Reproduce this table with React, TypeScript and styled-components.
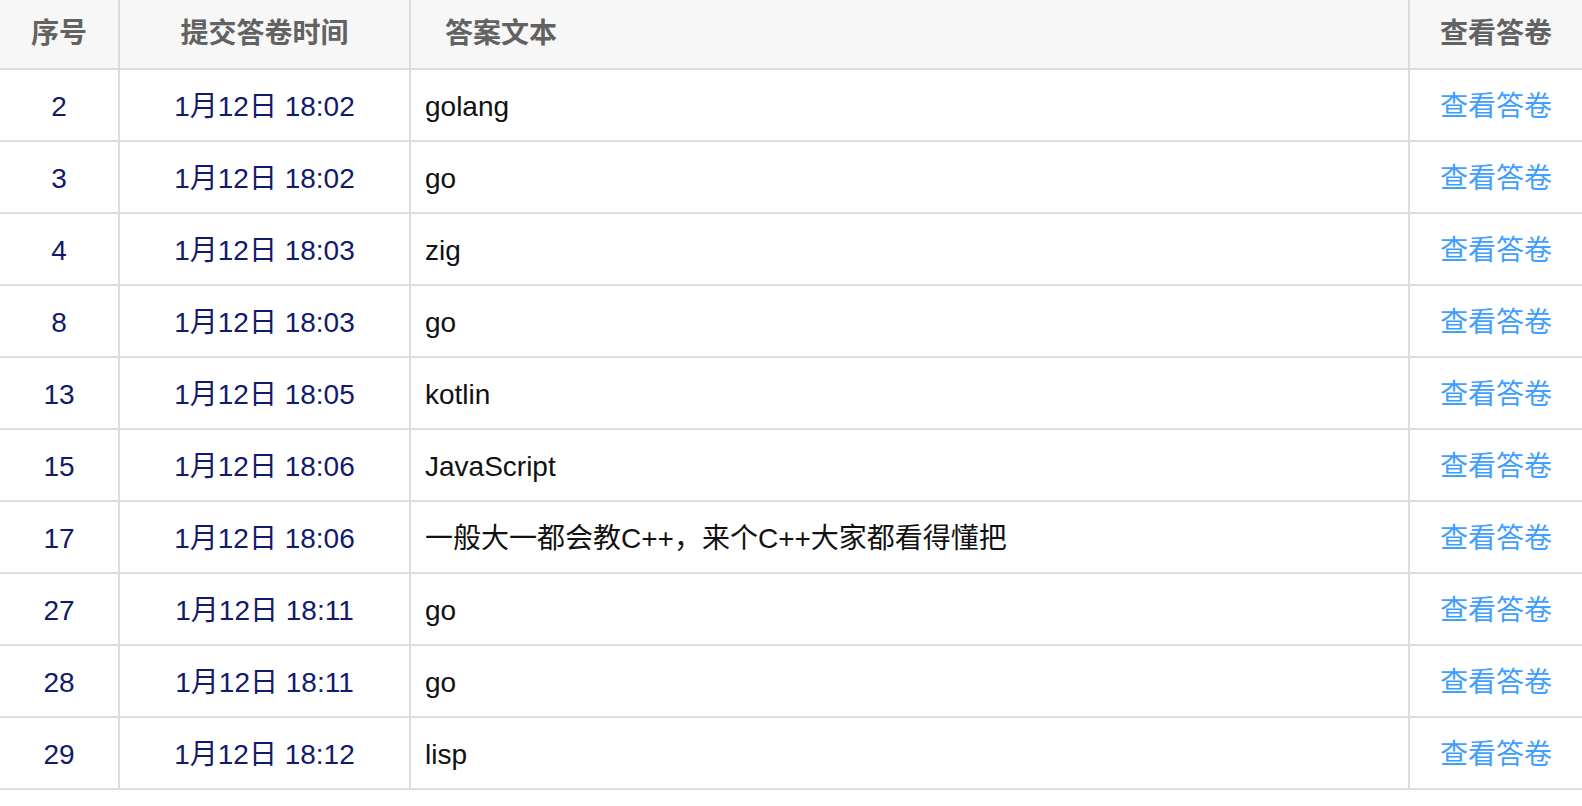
import styled, { createGlobalStyle } from "styled-components";

const GlobalStyle = createGlobalStyle`
  html, body {
    margin: 0;
    padding: 0;
    background: #fff;
  }
  body {
    font-family: "Liberation Sans", Arial, "Noto Sans CJK SC", sans-serif;
  }
`;

const Table = styled.table`
  width: 1582px;
  table-layout: fixed;
  border-collapse: separate;
  border-spacing: 0;
  font-size: 28px;
  line-height: 34px;
`;

const HeadCell = styled.th<{ $align?: "left" | "center"; $pad?: number }>`
  box-sizing: border-box;
  height: 70px;
  padding: 0 0 0 ${(p) => p.$pad ?? 0}px;
  background: #f7f7f7;
  color: #626262;
  font-weight: bold;
  text-align: ${(p) => p.$align ?? "center"};
  border-bottom: 2px solid #dcdcdc;
  border-right: 2px solid #dcdcdc;
  &:last-child {
    border-right: none;
  }
`;

const Cell = styled.td<{ $align?: "left" | "center"; $tone?: "navy" | "dark" }>`
  box-sizing: border-box;
  height: 72px;
  padding: 4px ${(p) => (p.$align === "left" ? "14px" : "0")} 0;
  color: ${(p) => (p.$tone === "dark" ? "#111" : "#111a6b")};
  text-align: ${(p) => p.$align ?? "center"};
  white-space: nowrap;
  border-bottom: 2px solid #dcdcdc;
  border-right: 2px solid #dcdcdc;
  &:last-child {
    border-right: none;
  }
`;

const ViewLink = styled.a`
  color: #409eff;
  text-decoration: none;
  cursor: pointer;
`;

type Answer = { id: number; time: string; text: string };

const answers: Answer[] = [
  { id: 2, time: "1月12日 18:02", text: "golang" },
  { id: 3, time: "1月12日 18:02", text: "go" },
  { id: 4, time: "1月12日 18:03", text: "zig" },
  { id: 8, time: "1月12日 18:03", text: "go" },
  { id: 13, time: "1月12日 18:05", text: "kotlin" },
  { id: 15, time: "1月12日 18:06", text: "JavaScript" },
  { id: 17, time: "1月12日 18:06", text: "一般大一都会教C++，来个C++大家都看得懂把" },
  { id: 27, time: "1月12日 18:11", text: "go" },
  { id: 28, time: "1月12日 18:11", text: "go" },
  { id: 29, time: "1月12日 18:12", text: "lisp" },
];

export default function App() {
  return (
    <>
      <GlobalStyle />
      <Table>
        <colgroup>
          <col style={{ width: 120 }} />
          <col style={{ width: 291 }} />
          <col style={{ width: 999 }} />
          <col style={{ width: 172 }} />
        </colgroup>
        <thead>
          <tr>
            <HeadCell>序号</HeadCell>
            <HeadCell>提交答卷时间</HeadCell>
            <HeadCell $align="left" $pad={34}>
              答案文本
            </HeadCell>
            <HeadCell>查看答卷</HeadCell>
          </tr>
        </thead>
        <tbody>
          {answers.map((a) => (
            <tr key={a.id}>
              <Cell>{a.id}</Cell>
              <Cell>{a.time}</Cell>
              <Cell $align="left" $tone="dark">
                {a.text}
              </Cell>
              <Cell>
                <ViewLink>查看答卷</ViewLink>
              </Cell>
            </tr>
          ))}
        </tbody>
      </Table>
    </>
  );
}
